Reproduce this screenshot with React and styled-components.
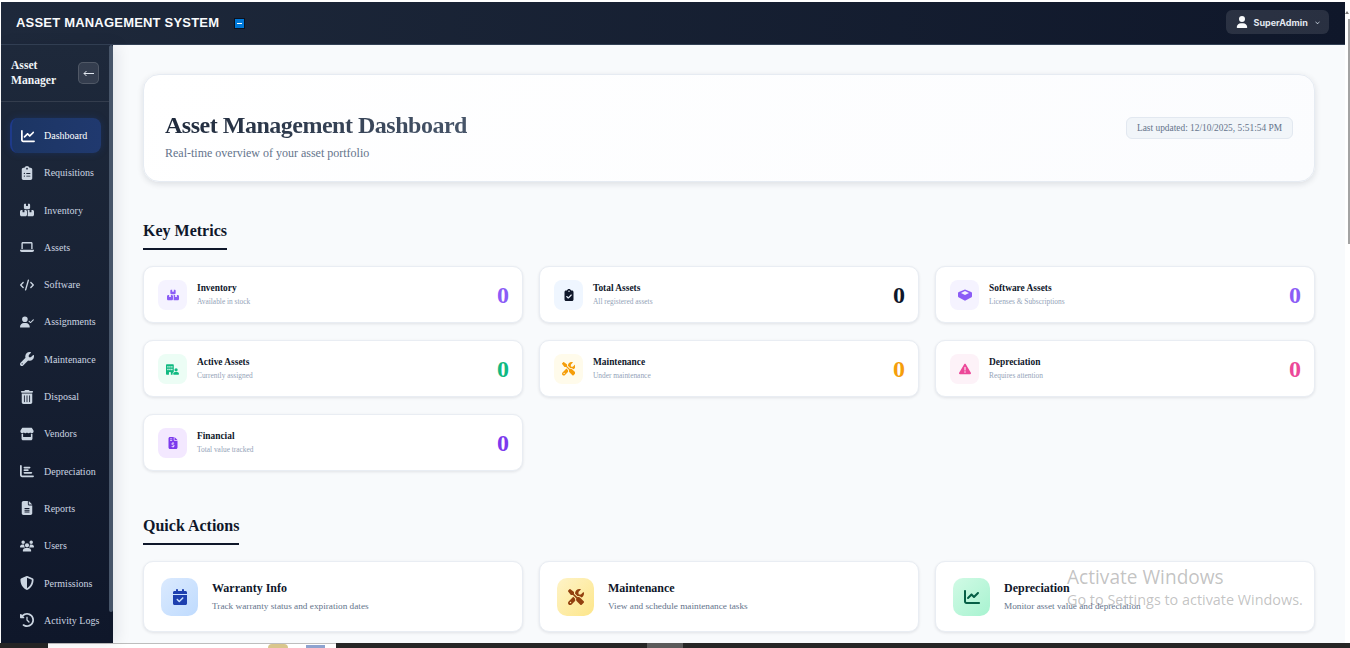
import React from 'react';
import styled, { createGlobalStyle } from 'styled-components';
import {
  FaChartLine, FaClipboardList, FaBoxesStacked, FaLaptop, FaCode, FaUserCheck, FaWrench, FaTrashCan,
  FaStore, FaChartBar, FaFileLines, FaUsers, FaShieldHalved, FaClockRotateLeft, FaUser, FaChevronDown,
  FaClipboardCheck, FaScrewdriverWrench, FaTriangleExclamation, FaFileInvoiceDollar, FaCalendarCheck,
  FaBuildingUser,
} from 'react-icons/fa6';

const serif = `'Liberation Serif', 'Times New Roman', serif`;

const GlobalStyle = createGlobalStyle`
  html, body {
    margin: 0;
    padding: 0;
    overflow: hidden;
    background: #fff;
  }
`;

const Frame = styled.div`
  position: relative;
  width: 1350px;
  height: 648px;
  overflow: hidden;
  display: flex;
  flex-direction: column;
  font-family: ${serif};
  background: #fff;
`;

const Window = styled.div`
  flex: 1;
  min-height: 0;
  display: flex;
  padding: 2px 0 0 1px;
`;

const AppArea = styled.div`
  flex: 1;
  min-width: 0;
  display: flex;
  flex-direction: column;
`;

const Header = styled.header`
  height: 42px;
  flex: none;
  box-sizing: content-box;
  display: flex;
  align-items: center;
  justify-content: space-between;
  padding: 0 16px 0 15px;
  background: linear-gradient(90deg, #1e293b, #0f172a);
  border-bottom: 1px solid #334155;
`;

const Brand = styled.div`
  display: flex;
  align-items: center;
  gap: 15px;
  margin-bottom: 2px;
`;

const BrandTitle = styled.h1`
  margin: 0;
  font-family: 'Liberation Sans', Arial, sans-serif;
  font-size: 13px;
  font-weight: 700;
  letter-spacing: 0.2px;
  color: #f8fafc;
`;

const BrandMark = styled.span`
  width: 9px;
  height: 9px;
  margin-top: 3px;
  background: #0078d7;
  border: 1px solid #0b1220;
  display: flex;
  align-items: center;
  justify-content: center;

  &::after {
    content: '';
    width: 5px;
    height: 1px;
    background: #fff;
  }
`;

const UserButton = styled.button`
  width: 103px;
  height: 24px;
  margin-bottom: 2px;
  padding: 0 9px 0 10px;
  display: flex;
  align-items: center;
  border: 0;
  border-radius: 6px;
  background: rgba(255, 255, 255, 0.11);
  color: #f1f5f9;
  font-family: Inter, 'Noto Sans', sans-serif;
  font-size: 9px;
  font-weight: 700;
`;

const UserName = styled.span`
  margin: 0 auto 0 5.5px;
  color: #e2e8f0;
`;

const Body = styled.div`
  flex: 1;
  min-height: 0;
  display: flex;
`;

const Sidebar = styled.aside`
  position: relative;
  z-index: 1;
  width: 112px;
  flex: none;
  display: flex;
  background: linear-gradient(180deg, #1e293b, #0f172a);
  box-shadow: 4px 0 14px rgba(15, 23, 42, 0.09);
`;

const SidebarInner = styled.div`
  flex: 1;
  min-width: 0;
`;

const SidebarTop = styled.div`
  height: 57px;
  box-sizing: border-box;
  padding: 0 10px;
  display: flex;
  align-items: center;
  justify-content: space-between;
  border-bottom: 1px solid rgba(255, 255, 255, 0.1);
`;

const SidebarTitle = styled.div`
  font-size: 11.6px;
  line-height: 15px;
  font-weight: 700;
  color: #f1f5f9;
  width: 50px;
`;

const BackButton = styled.button`
  width: 21px;
  height: 22px;
  padding: 0;
  display: flex;
  align-items: center;
  justify-content: center;
  border: 1px solid rgba(255, 255, 255, 0.14);
  border-radius: 5px;
  background: rgba(255, 255, 255, 0.1);
  color: #e2e8f0;
`;

const Nav = styled.nav`
  padding: 16px 8px 0 9px;
  display: flex;
  flex-direction: column;
  gap: 2.3px;
`;

const NavItem = styled.a`
  height: 35px;
  flex: none;
  box-sizing: border-box;
  display: flex;
  align-items: center;
  border-radius: 8px;
  font-size: 10px;
  color: ${(p) => (p.$active ? '#ffffff' : '#cbd5e1')};
  ${(p) => p.$active && `
    background: linear-gradient(90deg, #1c3563, #20396f);
    border-left: 2px solid #1e3a8a;
    box-shadow: 0 0 7px rgba(30, 64, 140, 0.35);
  `}
`;

const NavIcon = styled.span`
  width: ${(p) => (p.$active ? '32px' : '34px')};
  box-sizing: border-box;
  display: flex;
  justify-content: center;
  font-size: 14px;
  color: ${(p) => (p.$active ? '#ffffff' : '#cbd5e1')};
  flex: none;
`;

const BarTrack = styled.div`
  width: 4px;
  flex: none;
  background: #0f172a;
`;

const BarThumb = styled.div`
  height: 567px;
  background: #475569;
  border-radius: 2px;
`;

const Main = styled.main`
  flex: 1;
  min-width: 0;
  overflow: hidden;
  box-sizing: border-box;
  padding: 29px 30px 0 30px;
  background: #f8fafc;
`;

const Hero = styled.section`
  height: 108px;
  box-sizing: border-box;
  padding: 0 21px;
  display: flex;
  align-items: center;
  justify-content: space-between;
  background: linear-gradient(135deg, #ffffff, #fbfcfe);
  border: 1px solid #e6ebf2;
  border-radius: 16px;
  box-shadow: 0 2px 6px rgba(15, 23, 42, 0.12);
`;

const HeroHeading = styled.div`
  padding-top: 14px;
`;

const HeroTitle = styled.h2`
  margin: 0 0 7px;
  font-size: 24px;
  line-height: 28px;
  font-weight: 700;
  letter-spacing: -0.49px;
  background: linear-gradient(90deg, #1e293b, #475569);
  -webkit-background-clip: text;
  background-clip: text;
  color: transparent;
`;

const HeroSub = styled.p`
  margin: 0;
  font-size: 12px;
  line-height: 14px;
  color: #64748b;
`;

const Updated = styled.div`
  width: 167px;
  height: 22px;
  box-sizing: border-box;
  display: flex;
  align-items: center;
  justify-content: center;
  background: #f1f5f9;
  border: 1px solid #e2e8f0;
  border-radius: 6px;
  font-size: 9.4px;
  color: #64748b;
`;

const SectionTitle = styled.h3`
  display: table;
  margin: ${(p) => p.$top} 0 16px;
  padding-bottom: 8px;
  border-bottom: 2px solid #0f172a;
  font-size: 16px;
  line-height: 19px;
  font-weight: 700;
  color: #0f172a;
`;

const MetricGrid = styled.div`
  display: grid;
  grid-template-columns: repeat(3, 380px);
  grid-auto-rows: 57px;
  gap: 17px 16px;
`;

const MetricCard = styled.div`
  box-sizing: border-box;
  padding: 1px 13px 0 14px;
  display: flex;
  align-items: center;
  background: #fff;
  border: 1px solid #e9edf3;
  border-radius: 10px;
  box-shadow: 0 1px 3px rgba(15, 23, 42, 0.1);
`;

const MetricIcon = styled.div`
  width: 29px;
  height: 30px;
  flex: none;
  display: flex;
  align-items: center;
  justify-content: center;
  border-radius: 8px;
  font-size: ${(p) => p.$size || 12}px;
  background: ${(p) => p.$bg};
  color: ${(p) => p.$color};
`;

const MetricText = styled.div`
  margin: 0 0 1px 10px;
  flex: 1;
`;

const MetricName = styled.div`
  font-size: 9.4px;
  line-height: 12px;
  font-weight: 700;
  color: #0f172a;
`;

const MetricSub = styled.div`
  margin-top: 3px;
  font-size: 7.4px;
  line-height: 10px;
  color: #94a3b8;
`;

const MetricValue = styled.div`
  padding-top: 1px;
  font-size: 24px;
  font-weight: 700;
  color: ${(p) => p.$color};
`;

const ActionGrid = styled.div`
  display: grid;
  grid-template-columns: repeat(3, 380px);
  gap: 16px;
`;

const ActionCard = styled.div`
  height: 71px;
  box-sizing: border-box;
  padding: 0 17px;
  display: flex;
  align-items: center;
  background: #fff;
  border: 1px solid #e9edf3;
  border-radius: 10px;
  box-shadow: 0 1px 3px rgba(15, 23, 42, 0.1);
`;

const ActionIcon = styled.div`
  width: 37px;
  height: 38px;
  flex: none;
  display: flex;
  align-items: center;
  justify-content: center;
  border-radius: 10px;
  font-size: 16px;
  background: linear-gradient(135deg, ${(p) => p.$from}, ${(p) => p.$to});
  color: ${(p) => p.$color};
`;

const ActionText = styled.div`
  margin-left: 14px;
`;

const ActionName = styled.div`
  font-size: 12px;
  line-height: 14px;
  font-weight: 700;
  color: #0f172a;
`;

const ActionSub = styled.div`
  margin-top: 5px;
  font-size: 9.25px;
  line-height: 12px;
  color: #64748b;
`;

const PageBar = styled.div`
  width: 5px;
  flex: none;
  display: flex;
  flex-direction: column;
  align-items: flex-end;
`;

const PageArrow = styled.span`
  margin: 9px 1px 5px 0;
  width: 0;
  height: 0;
  border-left: 2px solid transparent;
  border-right: 2px solid transparent;
  border-bottom: 3px solid #777;
`;

const PageThumb = styled.div`
  width: 2px;
  height: 225px;
  background: #a3a3a3;
`;

const Taskbar = styled.div`
  height: 5px;
  flex: none;
  display: flex;
  background: #262626;
`;

const TaskGap = styled.div`
  width: ${(p) => p.$w}px;
  flex: none;
  background: ${(p) => p.$bg || 'transparent'};
`;

const PreviewStrip = styled.div`
  width: 288px;
  flex: none;
  box-sizing: border-box;
  display: flex;
  padding-left: 220px;
  background: #fff;
  border-top: 1px solid #bdbdbd;
`;

const PreviewCoin = styled.div`
  width: 20px;
  height: 4px;
  border-radius: 10px 10px 0 0;
  background: #d9c68c;
`;

const PreviewDoc = styled.div`
  width: 19px;
  height: 3px;
  margin: 1px 0 0 18px;
  background: #8ea3cf;
`;

const Watermark = styled.div`
  position: absolute;
  left: 1067px;
  top: 565px;
  font-family: 'Open Sans', 'Noto Sans', sans-serif;
  color: rgba(110, 110, 110, 0.42);
  pointer-events: none;
`;

const WatermarkTitle = styled.div`
  font-size: 19.1px;
  line-height: 24px;
`;

const WatermarkSub = styled.div`
  margin-top: 2px;
  font-size: 14.4px;
  line-height: 18px;
`;

// open box seen from above, none of the icon sets has this exact shape
const SoftwareBox = () => (
  <svg width="14" height="12" viewBox="0 0 14 12" aria-hidden="true">
    <path
      d="M7 .4 13.2 3c.5.2.8.6.8 1.1v3.2c0 .4-.2.7-.5.9L7 11.8.5 8.2C.2 8 0 7.700 0 7.300V4.100C0 3.600.3 3.200.8 3z"
      fill="currentColor"
    />
    <path d="M7 2 11 4 7 6.100 3 4z" fill="#f5f3ff" />
  </svg>
);

const BackArrow = () => (
  <svg width="11" height="7" viewBox="0 0 11 7" aria-hidden="true">
    <path d="M11 3.500H1M3.500 1 1 3.500 3.500 6" fill="none" stroke="currentColor" strokeWidth="1" />
  </svg>
);

const navLinks = [
  ['Dashboard', FaChartLine],
  ['Requisitions', FaClipboardList],
  ['Inventory', FaBoxesStacked],
  ['Assets', FaLaptop],
  ['Software', FaCode],
  ['Assignments', FaUserCheck],
  ['Maintenance', FaWrench],
  ['Disposal', FaTrashCan],
  ['Vendors', FaStore],
  ['Depreciation', FaChartBar],
  ['Reports', FaFileLines],
  ['Users', FaUsers],
  ['Permissions', FaShieldHalved],
  ['Activity Logs', FaClockRotateLeft],
];

const metrics = [
  { name: 'Inventory', sub: 'Available in stock', Icon: FaBoxesStacked, bg: '#f5f3ff', color: '#8b5cf6' },
  { name: 'Total Assets', sub: 'All registered assets', Icon: FaClipboardCheck, bg: '#eff6ff', color: '#0f172a' },
  { name: 'Software Assets', sub: 'Licenses & Subscriptions', Icon: SoftwareBox, bg: '#f5f3ff', color: '#8b5cf6' },
  { name: 'Active Assets', sub: 'Currently assigned', Icon: FaBuildingUser, size: 13, bg: '#ecfdf5', color: '#10b981' },
  { name: 'Maintenance', sub: 'Under maintenance', Icon: FaScrewdriverWrench, size: 13.5, bg: '#fffbeb', color: '#f59e0b' },
  { name: 'Depreciation', sub: 'Requires attention', Icon: FaTriangleExclamation, bg: '#fdf2f8', color: '#ec4899' },
  { name: 'Financial', sub: 'Total value tracked', Icon: FaFileInvoiceDollar, bg: '#f3e8ff', color: '#7c3aed' },
];

const actions = [
  { name: 'Warranty Info', sub: 'Track warranty status and expiration dates', Icon: FaCalendarCheck, from: '#dbeafe', to: '#bfdbfe', color: '#1e40af' },
  { name: 'Maintenance', sub: 'View and schedule maintenance tasks', Icon: FaScrewdriverWrench, from: '#fef3c7', to: '#fde68a', color: '#92400e' },
  { name: 'Depreciation', sub: 'Monitor asset value and depreciation', Icon: FaChartLine, from: '#d1fae5', to: '#a7f3d0', color: '#065f46' },
];

export default function App() {
  return (
    <Frame>
      <GlobalStyle />
      <Window>
        <AppArea>
          <Header>
            <Brand>
              <BrandTitle>ASSET MANAGEMENT SYSTEM</BrandTitle>
              <BrandMark />
            </Brand>
            <UserButton>
              <FaUser size={12} color="#f8fafc" />
              <UserName>SuperAdmin</UserName>
              <FaChevronDown size={5} color="#cbd5e1" />
            </UserButton>
          </Header>
          <Body>
            <Sidebar>
              <SidebarInner>
                <SidebarTop>
                  <SidebarTitle>Asset Manager</SidebarTitle>
                  <BackButton><BackArrow /></BackButton>
                </SidebarTop>
                <Nav>
                  {navLinks.map(([label, Icon], i) => (
                    <NavItem key={label} $active={i === 0}>
                      <NavIcon $active={i === 0}><Icon /></NavIcon>
                      {label}
                    </NavItem>
                  ))}
                </Nav>
              </SidebarInner>
              <BarTrack>
                <BarThumb />
              </BarTrack>
            </Sidebar>
            <Main>
              <Hero>
                <HeroHeading>
                  <HeroTitle>Asset Management Dashboard</HeroTitle>
                  <HeroSub>Real-time overview of your asset portfolio</HeroSub>
                </HeroHeading>
                <Updated>Last updated: 12/10/2025, 5:51:54 PM</Updated>
              </Hero>

              <SectionTitle $top="39px">Key Metrics</SectionTitle>
              <MetricGrid>
                {metrics.map((m) => (
                  <MetricCard key={m.name}>
                    <MetricIcon $bg={m.bg} $color={m.color} $size={m.size}><m.Icon /></MetricIcon>
                    <MetricText>
                      <MetricName>{m.name}</MetricName>
                      <MetricSub>{m.sub}</MetricSub>
                    </MetricText>
                    <MetricValue $color={m.color}>0</MetricValue>
                  </MetricCard>
                ))}
              </MetricGrid>

              <SectionTitle $top="45px">Quick Actions</SectionTitle>
              <ActionGrid>
                {actions.map((a) => (
                  <ActionCard key={a.name}>
                    <ActionIcon $from={a.from} $to={a.to} $color={a.color}><a.Icon /></ActionIcon>
                    <ActionText>
                      <ActionName>{a.name}</ActionName>
                      <ActionSub>{a.sub}</ActionSub>
                    </ActionText>
                  </ActionCard>
                ))}
              </ActionGrid>
            </Main>
          </Body>
        </AppArea>
        <PageBar>
          <PageArrow />
          <PageThumb />
        </PageBar>
      </Window>
      <Taskbar>
        <TaskGap $w={48} />
        <PreviewStrip>
          <PreviewCoin />
          <PreviewDoc />
        </PreviewStrip>
        <TaskGap $w={311} />
        <TaskGap $w={36} $bg="#5a5a5a" />
      </Taskbar>
      <Watermark>
        <WatermarkTitle>Activate Windows</WatermarkTitle>
        <WatermarkSub>Go to Settings to activate Windows.</WatermarkSub>
      </Watermark>
    </Frame>
  );
}
